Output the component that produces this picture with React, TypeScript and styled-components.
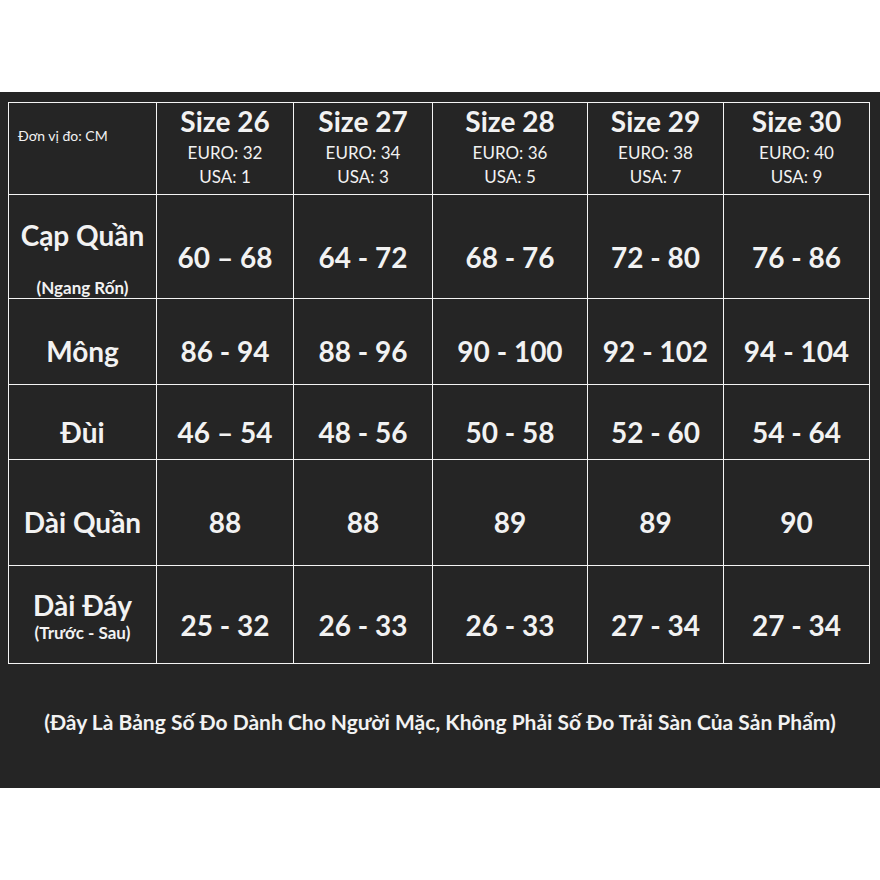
import React from 'react';
import styled, { createGlobalStyle } from 'styled-components';

const GlobalStyle = createGlobalStyle`
  html, body {
    margin: 0;
    padding: 0;
    background: #ffffff;
  }
  body {
    font-family: Lato, "Open Sans", "Liberation Sans", sans-serif;
  }
`;

interface SizeHead {
  size: number;
  euro: number;
  usa: number;
}

interface MeasureRow {
  label: string;
  note?: string;
  values: string[];
  shift: number; // padding-top that pushes the text a bit down, like the sheet
  labelShift: number;
  noteGap?: number;
}

const sizes: SizeHead[] = [
  { size: 26, euro: 32, usa: 1 },
  { size: 27, euro: 34, usa: 3 },
  { size: 28, euro: 36, usa: 5 },
  { size: 29, euro: 38, usa: 7 },
  { size: 30, euro: 40, usa: 9 },
];

const rows: MeasureRow[] = [
  {
    label: 'Cạp Quần',
    note: '(Ngang Rốn)',
    values: ['60 – 68', '64 - 72', '68 - 76', '72 - 80', '76 - 86'],
    shift: 20,
    labelShift: 24,
    noteGap: 25,
  },
  {
    label: 'Mông',
    values: ['86 - 94', '88 - 96', '90 - 100', '92 - 102', '94 - 104'],
    shift: 18,
    labelShift: 18,
  },
  {
    label: 'Đùi',
    values: ['46 – 54', '48 - 56', '50 - 58', '52 - 60', '54 - 64'],
    shift: 19,
    labelShift: 19,
  },
  {
    label: 'Dài Quần',
    values: ['88', '88', '89', '89', '90'],
    shift: 18,
    labelShift: 18,
  },
  {
    label: 'Dài Đáy',
    note: '(Trước - Sau)',
    values: ['25 - 32', '26 - 33', '26 - 33', '27 - 34', '27 - 34'],
    shift: 21,
    labelShift: 2,
    noteGap: 0,
  },
];

const App: React.FC = () => {
  return (
    <>
      <GlobalStyle />
      <Panel>
        <Table>
          <CornerCell>
            <UnitText>Đơn vị đo: CM</UnitText>
          </CornerCell>
          {sizes.map((s) => (
            <HeadCell key={s.size}>
              <SizeTitle>Size {s.size}</SizeTitle>
              <SizeSub>EURO: {s.euro}</SizeSub>
              <SizeSub>USA: {s.usa}</SizeSub>
            </HeadCell>
          ))}
          {rows.map((row) => (
            <React.Fragment key={row.label}>
              <LabelCell $shift={row.labelShift}>
                <LabelText>{row.label}</LabelText>
                {row.note && <NoteText $gap={row.noteGap ?? 0}>{row.note}</NoteText>}
              </LabelCell>
              {row.values.map((v, i) => (
                <DataCell key={i} $shift={row.shift}>
                  {v}
                </DataCell>
              ))}
            </React.Fragment>
          ))}
        </Table>
        <Footnote>
          (Đây Là Bảng Số Đo Dành Cho Người Mặc, Không Phải Số Đo Trải Sàn Của Sản Phẩm)
        </Footnote>
      </Panel>
    </>
  );
};

export default App;

const Panel = styled.div`
  margin-top: 92px;
  width: 880px;
  height: 696px;
  box-sizing: border-box;
  padding: 10px 0 0 8px;
  background: #252525;
  color: #f2f2f2;
  display: flex;
  flex-direction: column;
`;

const Table = styled.div`
  display: grid;
  grid-template-columns: 147px 136px 138px 154px 135px 145px;
  grid-template-rows: 91px 103px 85px 74px 105px 97px;
  gap: 1px;
  padding: 1px;
  width: max-content;
  background: #f4f4f4;
`;

const Cell = styled.div`
  background: #252525;
  display: flex;
  flex-direction: column;
  align-items: center;
  justify-content: center;
  box-sizing: border-box;
`;

const CornerCell = styled(Cell)`
  align-items: flex-start;
  justify-content: flex-start;
  padding: 25px 0 0 9px;
`;

const UnitText = styled.span`
  font-size: 14px;
  line-height: 16px;
`;

const HeadCell = styled(Cell)`
  padding-bottom: 4px;
`;

const SizeTitle = styled.div`
  font-size: 28px;
  font-weight: 700;
  line-height: 34px;
  margin-bottom: 3px;
`;

const SizeSub = styled.div`
  font-size: 17px;
  line-height: 24px;
`;

const LabelCell = styled(Cell)<{ $shift: number }>`
  padding-top: ${(p) => p.$shift}px;
`;

const LabelText = styled.div`
  font-size: 28px;
  font-weight: 700;
  line-height: 34px;
  white-space: nowrap;
`;

const NoteText = styled.div<{ $gap: number }>`
  margin-top: ${(p) => p.$gap}px;
  font-size: 17px;
  font-weight: 700;
  line-height: 22px;
  white-space: nowrap;
`;

const DataCell = styled(Cell)<{ $shift: number }>`
  padding-top: ${(p) => p.$shift}px;
  font-size: 28px;
  font-weight: 700;
  line-height: 34px;
  white-space: nowrap;
`;

const Footnote = styled.div`
  margin: 43px 0 0 -8px;
  width: 880px;
  text-align: center;
  font-size: 21px;
  font-weight: 700;
  line-height: 30px;
`;
